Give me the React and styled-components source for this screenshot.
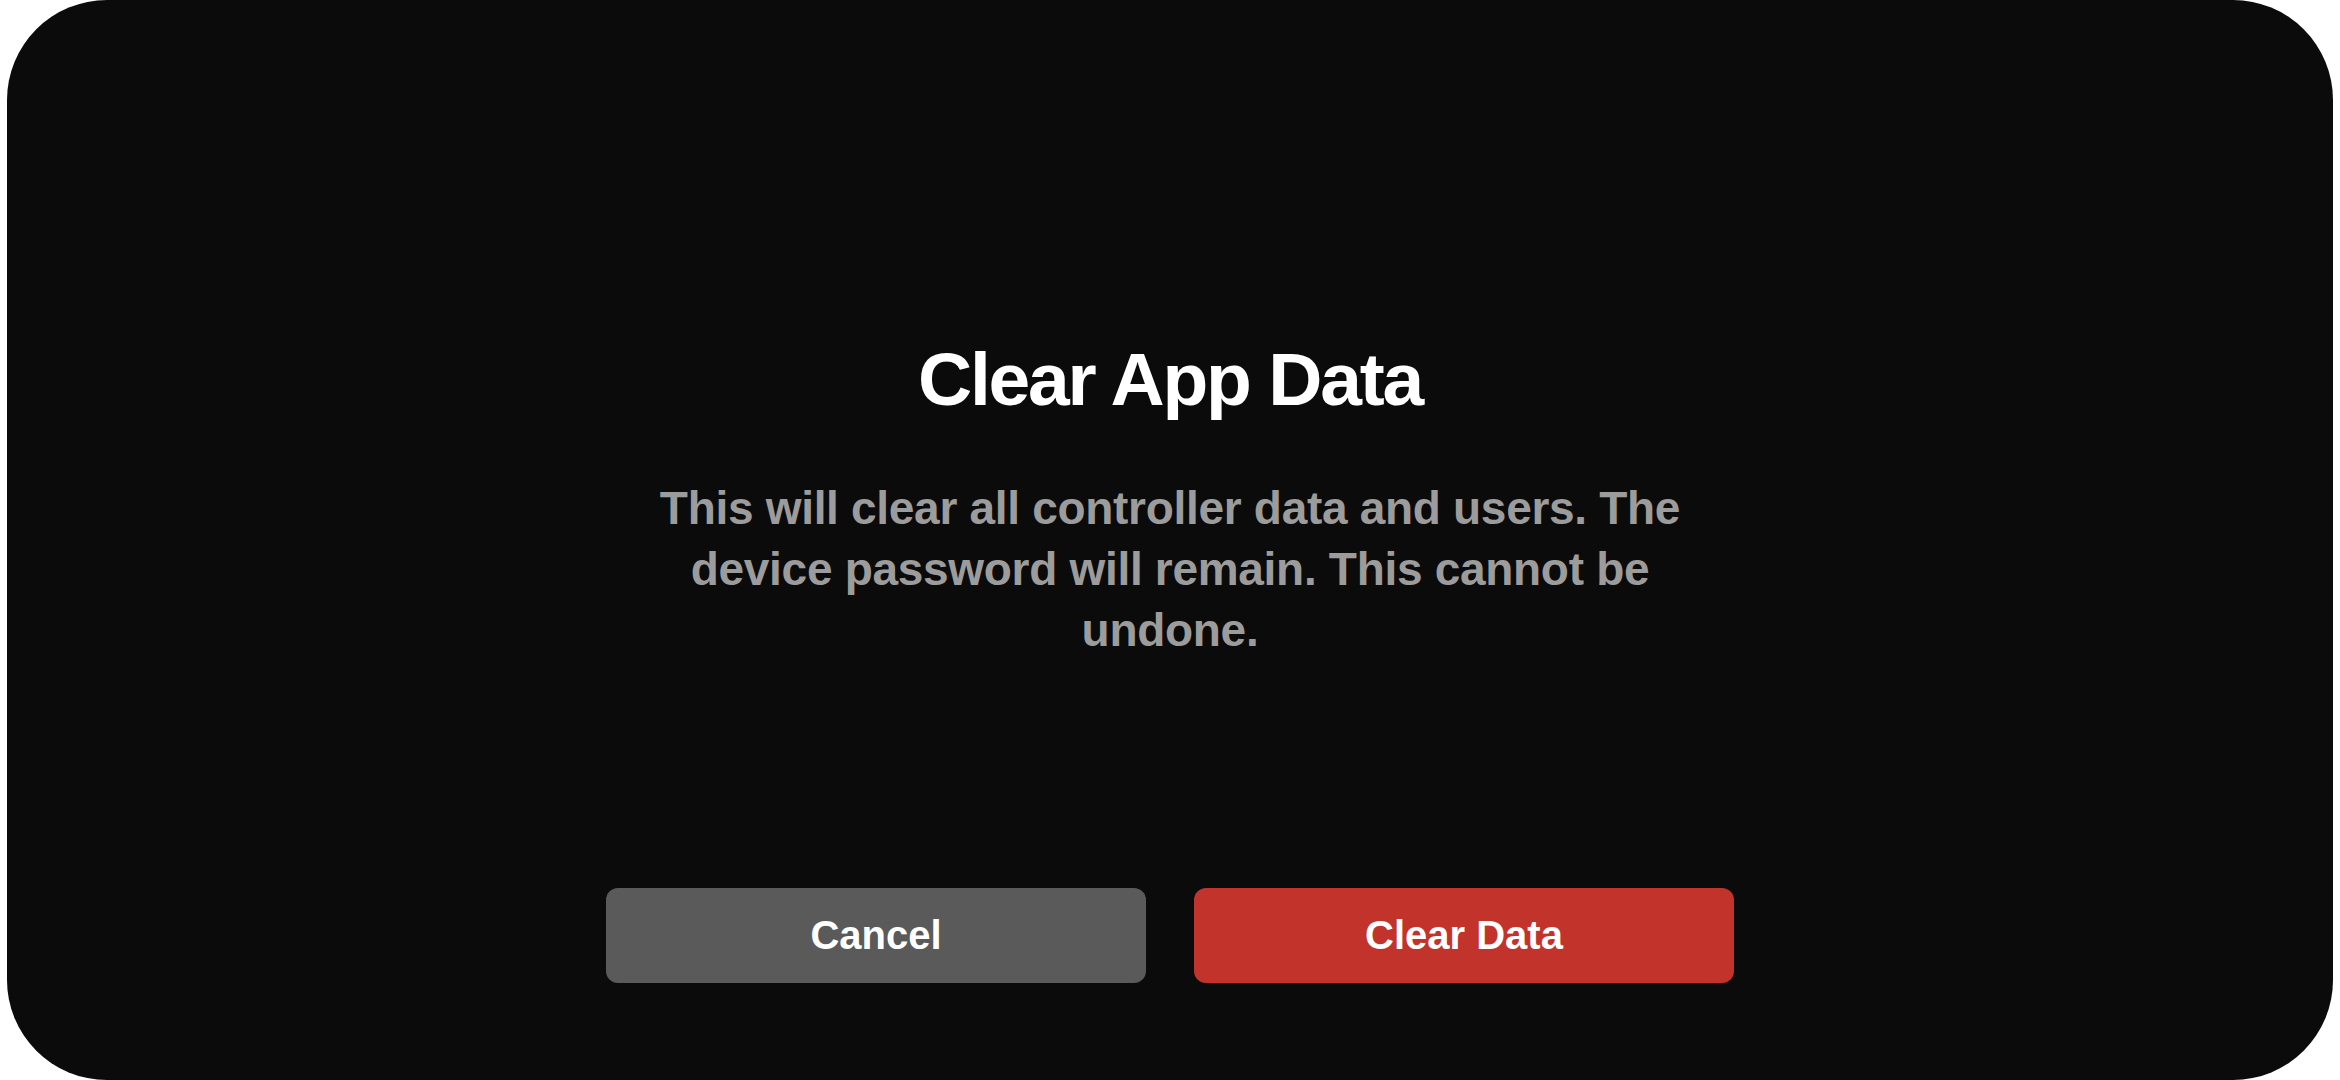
import React from "react";
import styled, { createGlobalStyle } from "styled-components";

const Global = createGlobalStyle`
  html, body { margin: 0; padding: 0; background: #ffffff; }
  body { font-family: "Liberation Sans", Arial, sans-serif; }
  * { box-sizing: border-box; }
`;

const Screen = styled.div`
  width: 2340px;
  height: 1080px;
  padding: 0 7px;
  background: #ffffff;
`;

const Card = styled.div`
  height: 1080px;
  background: #0b0b0b;
  border-radius: 100px;
  display: flex;
  flex-direction: column;
  align-items: center;
  padding: 334px 0 97px;
`;

const Title = styled.h1`
  margin: 0;
  font-size: 75px;
  line-height: 90px;
  font-weight: 700;
  letter-spacing: -2.2px;
  color: #ffffff;
  text-align: center;
`;

const Message = styled.p`
  margin: 54px 0 0;
  max-width: 1080px;
  font-size: 46px;
  line-height: 61px;
  font-weight: 700;
  letter-spacing: -0.3px;
  color: #9c9c9c;
  text-align: center;
`;

const Spacer = styled.div`
  flex: 1;
`;

const Actions = styled.div`
  display: flex;
  gap: 48px;
`;

const ActionButton = styled.button`
  width: 540px;
  height: 95px;
  border: none;
  border-radius: 12px;
  background: ${(p) => (p.$danger ? "#c1332b" : "#5a5a5a")};
  color: #ffffff;
  font-family: "Liberation Sans", Arial, sans-serif;
  font-size: 40px;
  font-weight: 700;
  display: flex;
  align-items: center;
  justify-content: center;
  padding: 0;
  cursor: pointer;
`;

export default function App() {
  return (
    <>
      <Global />
      <Screen>
        <Card>
          <Title>Clear App Data</Title>
          <Message>
            This will clear all controller data and users. The device password
            will remain. This cannot be undone.
          </Message>
          <Spacer />
          <Actions>
            <ActionButton>Cancel</ActionButton>
            <ActionButton $danger>Clear Data</ActionButton>
          </Actions>
        </Card>
      </Screen>
    </>
  );
}
